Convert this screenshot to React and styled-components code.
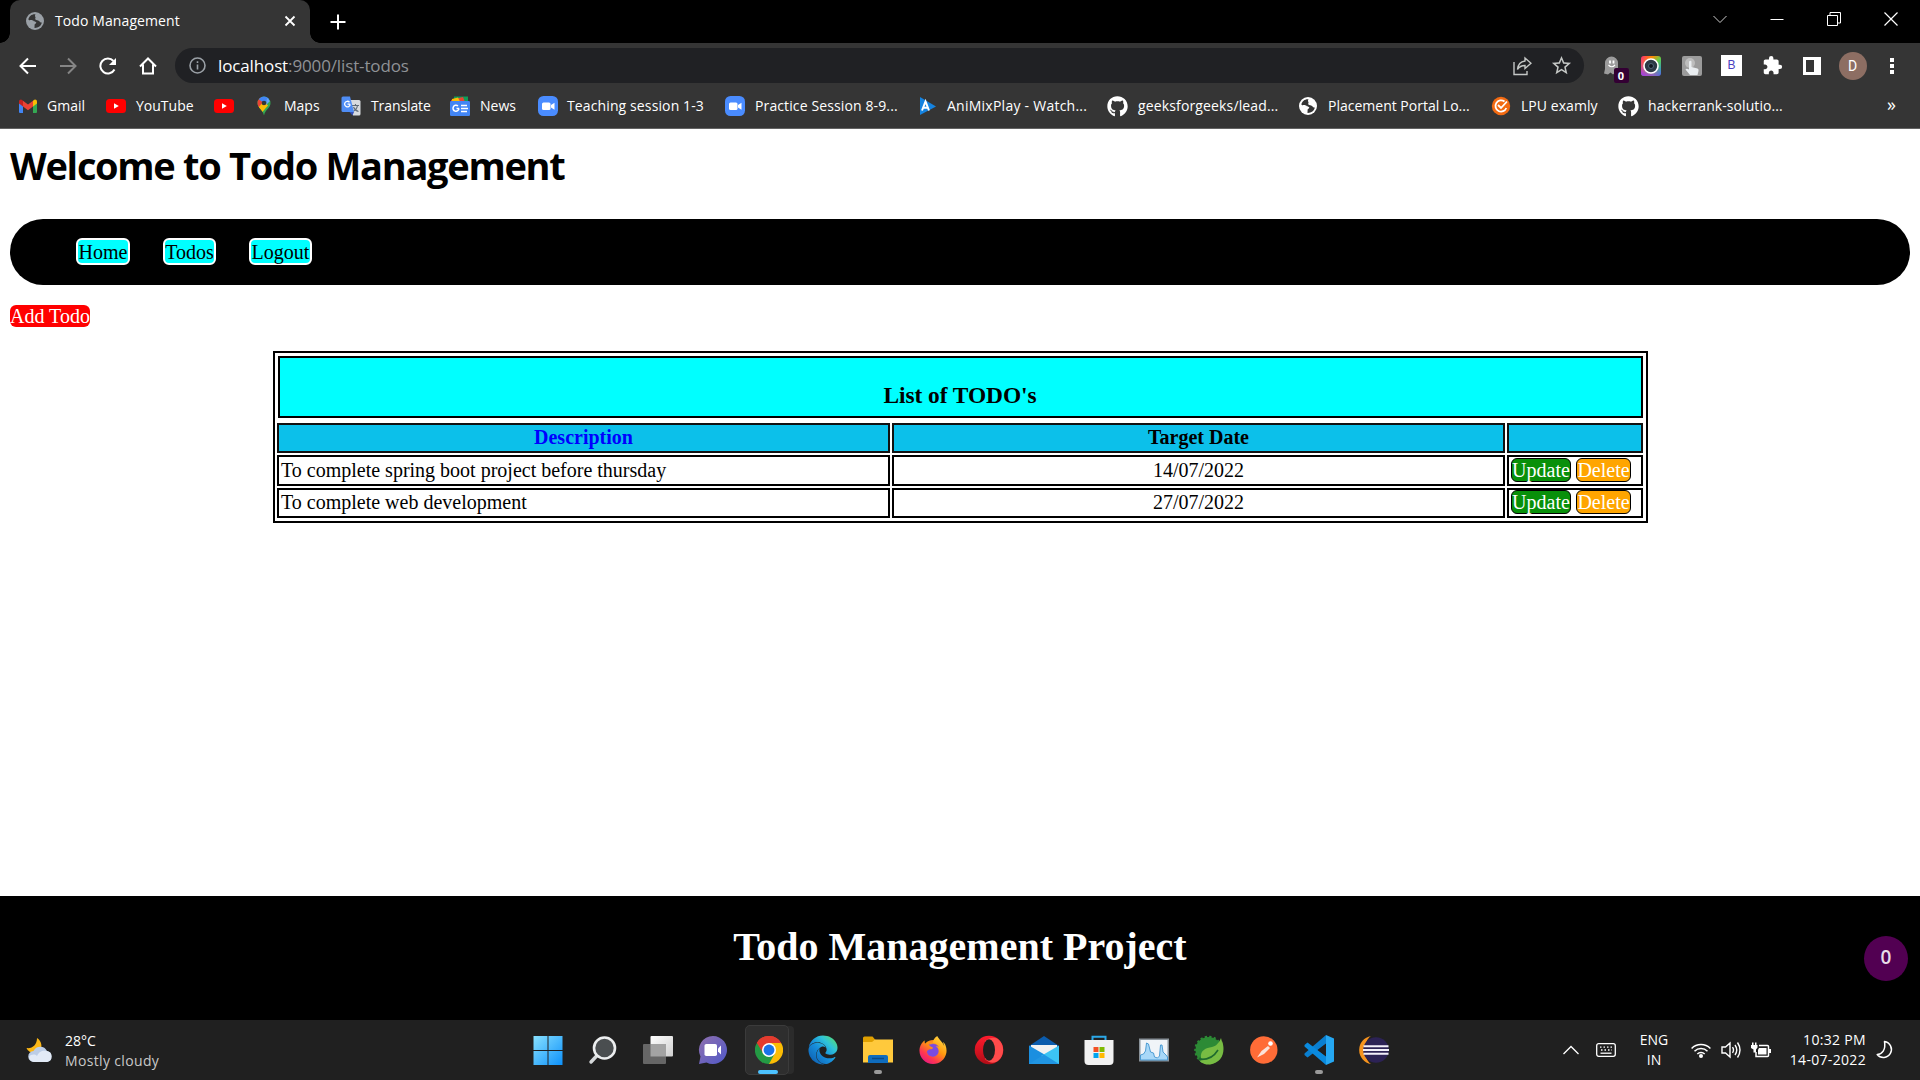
import React from 'react';
import styled, { createGlobalStyle } from 'styled-components';
import { FaGithub, FaEdge } from 'react-icons/fa';
import { MdExtension, MdStarBorder } from 'react-icons/md';
import { SiFirefoxbrowser } from 'react-icons/si';

const ui = '"Open Sans", "Noto Sans", sans-serif';
const serif = '"Liberation Serif", "Times New Roman", serif';

const Global = createGlobalStyle`
  * { box-sizing: border-box; }
  body { margin: 0; background: #fff; overflow: hidden; }
  svg { display: block; flex: none; }
  a { text-decoration: none; color: inherit; }
`;

const Screen = styled.div`
  width: 1920px;
  height: 1080px;
  display: flex;
  flex-direction: column;
  font-family: ${ui};
`;

/* ---------- browser chrome ---------- */
const TabStrip = styled.div`
  height: 43px;
  background: #000;
  display: flex;
  align-items: stretch;
  padding-left: 10px;
  color: #fff;
`;
const Tab = styled.div`
  position: relative;
  width: 300px;
  background: #353535;
  border-radius: 10px 10px 0 0;
  display: flex;
  align-items: center;
  padding: 0 12px 2px 16px;
  &::before, &::after {
    content: '';
    position: absolute;
    bottom: 0;
    width: 10px;
    height: 10px;
  }
  &::before { left: -10px; background: radial-gradient(circle at 0 0, #000 9.5px, #353535 10px); }
  &::after { right: -10px; background: radial-gradient(circle at 100% 0, #000 9.5px, #353535 10px); }
`;
const TabTitle = styled.span`
  flex: 1;
  margin-left: 11px;
  font-size: 14px;
  letter-spacing: 0.1px;
  white-space: nowrap;
`;
const NewTab = styled.div`
  width: 55px;
  display: flex;
  align-items: center;
  justify-content: center;
`;
const WindowButtons = styled.div`
  margin-left: auto;
  display: flex;
  align-items: center;
  padding-bottom: 6px;
`;
const Slot = styled.div`
  width: ${(p) => p.$w}px;
  flex: none;
  display: flex;
  align-items: center;
  justify-content: center;
`;

const Toolbar = styled.div`
  height: 45px;
  background: #353535;
  display: flex;
  align-items: center;
  padding: 0 9px 0 7px;
  color: #fff;
`;
const Omnibox = styled.div`
  width: 1410px;
  height: 35px;
  margin-left: 8px;
  border-radius: 18px;
  background: #202124;
  display: flex;
  align-items: center;
  padding: 0 3px 0 14px;
  color: #c4c7c5;
`;
const Url = styled.span`
  flex: 1;
  margin-left: 12px;
  padding-bottom: 1px;
  color: #8f9296;
  font-size: 17px;
  letter-spacing: -0.13px;
  white-space: nowrap;
  b { font-weight: 400; color: #fff; }
`;
const Extensions = styled.div`
  display: flex;
  align-items: center;
  margin-left: 7px;
`;
const GhostWrap = styled.div`
  position: relative;
  width: 20px;
  height: 26px;
`;
const GhostBadge = styled.span`
  position: absolute;
  left: 13px;
  top: 15px;
  width: 15px;
  height: 15px;
  border-radius: 2px;
  background: #330033;
  color: #fff;
  font-size: 11px;
  font-weight: 700;
  line-height: 16px;
  text-align: center;
`;
const BBox = styled.div`
  width: 21px;
  height: 21px;
  background: #fff;
  color: #4a3fc0;
  font: 12px/21px "Liberation Sans", Arial, sans-serif;
  text-align: center;
`;
const Avatar = styled.div`
  width: 28px;
  height: 28px;
  border-radius: 50%;
  background: #8d6e63;
  color: #fff;
  font: 14px/28px Roboto, sans-serif;
  text-align: center;
`;

const Bookmarks = styled.div`
  height: 41px;
  background: #353535;
  border-bottom: 1px solid #636363;
  display: flex;
  align-items: center;
  padding: 0 0 4px 18px;
  color: #fff;
`;
const Bookmark = styled.div`
  width: ${(p) => p.$w}px;
  flex: none;
  display: flex;
  align-items: center;
  gap: ${(p) => 10 + (p.$dx || 0)}px;
  font-size: 14px;
  letter-spacing: ${(p) => p.$ls || 0}px;
  white-space: nowrap;
  span { padding-bottom: 2px; }
`;
const More = styled.span`
  margin-left: auto;
  padding: 0 24px 4px 0;
  font-size: 18px;
`;

/* ---------- page ---------- */
const Page = styled.main`
  height: 767px;
  background: #fff;
  padding: 0 10px;
  font-family: ${serif};
  font-size: 20px;
  line-height: 22px;
  color: #000;
`;
const Title = styled.h1`
  margin: 0;
  height: 90px;
  padding-top: 9px;
  font: 700 38px/54px ${ui};
  letter-spacing: -1.3px;
  white-space: nowrap;
`;
const Nav = styled.nav`
  height: 66px;
  border-radius: 33px;
  background: #000;
  display: flex;
  gap: 33px;
  padding: 19px 0 0 66px;
`;
const NavLink = styled.a`
  width: ${(p) => p.$w}px;
  height: 27px;
  padding-top: 1px;
  border: 2px solid #fff;
  border-radius: 6px;
  background: cyan;
  text-align: center;
  white-space: nowrap;
`;
const AddTodo = styled.a`
  display: block;
  width: 80px;
  height: 22px;
  margin: 20px 0 24px;
  border-radius: 6px;
  background: red;
  color: #fff;
  white-space: nowrap;
`;
const TodoTable = styled.div`
  width: 1375px;
  height: 172px;
  margin-left: 263px;
  border: 2px solid #000;
  padding: 3px 3px 3px 2px;
`;
const Caption = styled.div`
  height: 62px;
  margin: 0 0 5px 1px;
  border: 2px solid #000;
  background: cyan;
  padding: 24px 1px 0 0;
  font-size: 23.4px;
  line-height: 26px;
  letter-spacing: -0.05px;
  font-weight: 700;
  text-align: center;
`;
const Row = styled.div`
  display: grid;
  grid-template-columns: 613px 613px 136px;
  column-gap: 2px;
  height: ${(p) => p.$h}px;
  margin-bottom: 2px;
`;
const Cell = styled.div`
  border: 2px solid #000;
  padding: ${(p) => p.$top}px 2px 0;
  text-align: ${(p) => (p.$center ? 'center' : 'left')};
`;
const HeadCell = styled(Cell)`
  border-color: #111;
  background: #0cc0ea;
  color: ${(p) => p.$color || '#000'};
  font-weight: 700;
  text-align: center;
`;
const Actions = styled(Cell)`
  display: flex;
  gap: 5px;
`;
const Action = styled.a`
  width: ${(p) => p.$w}px;
  height: 24px;
  border: 1px solid #000;
  border-radius: 6px;
  background: ${(p) => p.$bg};
  color: #fff;
  display: flex;
  justify-content: center;
`;
const Footer = styled.footer`
  position: relative;
  height: 124px;
  background: #000;
  color: #fff;
  padding-top: 28px;
  font: 700 40px/46px ${serif};
  text-align: center;
`;
const FloatBadge = styled.div`
  position: absolute;
  right: 12px;
  top: 40px;
  width: 44px;
  height: 45px;
  border-radius: 50%;
  background: #520052;
  color: #e8dce8;
  font: 600 19px/43px ${ui};
`;

/* ---------- taskbar ---------- */
const Taskbar = styled.div`
  height: 60px;
  background: #202020;
  display: flex;
  align-items: center;
  color: #fff;
  font-size: 14px;
`;
const Weather = styled.div`
  width: 520.5px;
  display: flex;
  align-items: center;
  gap: 11px;
  padding-left: 26px;
  line-height: 20px;
`;
const WeatherText = styled.div`
  padding-top: 1px;
`;
const Muted = styled.div`
  color: #c8c8c8;
  letter-spacing: 0.35px;
`;
const AppSlot = styled.div`
  position: relative;
  width: 55.07px;
  height: 50px;
  flex: none;
  display: flex;
  align-items: center;
  justify-content: center;
`;
const ActiveTile = styled.div`
  width: 44px;
  height: 50px;
  margin-right: 4px;
  margin-left: 1px;
  border-radius: 5px;
  background: #2e2e2e;
  border: 1px solid #3b3b3b;
  box-shadow: 6px 0 0 -1px #2b2b2b;
  display: flex;
  align-items: center;
  justify-content: center;
  padding-left: 4px;
`;
const Indicator = styled.i`
  position: absolute;
  bottom: 1px;
  left: calc(50% - ${(p) => p.$w / 2}px);
  width: ${(p) => p.$w}px;
  height: 4px;
  border-radius: 2px;
  background: ${(p) => p.$c};
`;
const Tray = styled.div`
  margin-left: auto;
  display: flex;
  align-items: center;
  padding-right: 17px;
`;
const Stack = styled.div`
  width: ${(p) => p.$w}px;
  text-align: ${(p) => p.$align};
  line-height: 20px;
  letter-spacing: ${(p) => p.$ls || 0}px;
  white-space: nowrap;
`;

/* ---------- icons ---------- */
const Svg = ({ s = 20, w, h, vb, children, ...r }) => (
  <svg width={w || s} height={h || s} viewBox={vb || `0 0 ${w || s} ${h || s}`} fill="none" {...r}>
    {children}
  </svg>
);
const Globe = ({ s = 18, color = '#fff' }) => (
  <Svg s={s} vb="0 0 18 18">
    <circle cx="9" cy="9" r="9" fill={color} />
    <path d="M9.500 2.200C6 1.800 3 4 2.300 7.500c1.500 1.300 3.500.6 5 1 .5 1.500 2.800.5 3 2.300-.2 1-1.500.9-1.700 1.900l-.1 3.200c3.500.2 6.700-2 7.300-5.400-1.300.2-2-.7-2.800-1.500-1-.9-2.500-.5-3.600-1.500-.7-1 .6-1.600 0-2.600-.7-.9-.4-1.800.1-2.700z" fill="#353535" />
  </Svg>
);
const YouTube = () => (
  <Svg s={20}>
    <rect x="0" y="3" width="20" height="14" rx="3.500" fill="#f00" />
    <path d="M8 7.200v5.600l4.800-2.800z" fill="#fff" />
  </Svg>
);
const Gmail = () => (
  <Svg s={20}>
    <path d="M1 6v10q0 1 1 1h3V9z" fill="#4285f4" />
    <path d="M19 6v10q0 1-1 1h-3V9z" fill="#34a853" />
    <path d="M15 5v5.500L19 7.500V5.500c0-2-2-2.700-3.300-1.500z" fill="#fbbc04" />
    <path d="M5 5v5.500L1 7.500V5.500c0-2 2-2.700 3.300-1.500z" fill="#c5221f" />
    <path d="M5 4.800L10 8.500l5-3.700v5.700l-5 3.700-5-3.700z" fill="#ea4335" />
  </Svg>
);
const Maps = () => (
  <Svg s={20}>
    <clipPath id="pin"><path d="M10 .5a6.500 6.500 0 0 1 6.500 6.500c0 5-5 6-6.500 12.500C8.500 13 3.500 12 3.500 7A6.500 6.500 0 0 1 10 .5z" /></clipPath>
    <g clipPath="url(#pin)">
      <path d="M0 0h20v20H0z" fill="#34a853" />
      <path d="M0 0h6l4 7-6 6H0z" fill="#ea4335" />
      <path d="M4 12l6-7 4 4.500L7.500 17z" fill="#fbbc04" />
      <path d="M5.500 0H16l-1 4-5 3-5-3.500z" fill="#4285f4" />
      <path d="M13 2l3 3-4 4z" fill="#6aa3fa" />
    </g>
    <circle cx="10" cy="7" r="2.300" fill="#353535" />
  </Svg>
);
const Translate = () => (
  <Svg s={20}>
    <path d="M8 4h10q1.500 0 1.500 1.500V18q0 1.500-1.500 1.500h-6z" fill="#d8dbdf" />
    <path d="M11 9.500h7M14.500 8v1.500M16.500 9.500c-.5 3-2.500 5-4.500 6M12.500 11c1 2.500 3 4 5 4.500" stroke="#5f6b78" strokeWidth="1.100" />
    <path d="M2 .5h7L13 16H2Q.5 16 .5 14.500V2Q.5.5 2 .5z" fill="#4f8df5" />
    <path d="M8.500 16H13l-1.500 3.500z" fill="#3450b8" />
    <path d="M9.200 8.200H6.500M8.500 6.200a2.800 2.800 0 1 0 .7 2.200" stroke="#fff" strokeWidth="1.300" />
  </Svg>
);
const News = () => (
  <Svg s={20}>
    <path d="M4 .5h14V6H4z" fill="#0f9d58" />
    <path d="M1 4l12-3 2 5H1z" fill="#ea4335" />
    <path d="M2 3l6-1.500 2 4H2z" fill="#fbbc04" />
    <rect y="5" width="20" height="15" rx="1.300" fill="#4285f4" />
    <path d="M9 12.500H6.500M8 10a3 3 0 1 0 1 2.500M11 9.500h6M11 12.500h7M11 15.500h6" stroke="#fff" strokeWidth="1.500" />
  </Svg>
);
const Zoom = () => (
  <Svg s={20}>
    <rect width="20" height="20" rx="5.500" fill="#4a8cff" />
    <rect x="4" y="6.500" width="8.500" height="7.500" rx="1.500" fill="#fff" />
    <path d="M13 9l3.500-2.300v7L13 11.500z" fill="#fff" />
  </Svg>
);
const Ani = () => (
  <Svg s={20}>
    <path d="M2 1l16 9.500L2 19z" fill="#1583e0" />
    <path d="M4 14.500L7.500 5.500 11 14.500M5.500 11.800h4" stroke="#fff" strokeWidth="2" />
  </Svg>
);
const Examly = () => (
  <Svg s={20}>
    <circle cx="10" cy="10" r="9.200" fill="#f26a12" />
    <path d="M13.500 5.500A5.600 5.600 0 1 0 15.300 12M7 9l3 3 6-6.500" stroke="#fff" strokeWidth="1.800" />
  </Svg>
);
const Moon = () => (
  <Svg w={18} h={20}>
    <path d="M8.500 1.500A8 8 0 1 1 1.200 14.500C6 14.500 10 10 8.500 1.500z" stroke="#fff" strokeWidth="1.500" strokeLinejoin="round" />
  </Svg>
);
const Start = () => (
  <Svg s={30}>
    <defs><linearGradient id="win" x1="0" y1="0" x2="30" y2="30" gradientUnits="userSpaceOnUse"><stop stopColor="#8be3ff" /><stop offset="1" stopColor="#0c90fa" /></linearGradient></defs>
    <path d="M.5 1h14v14H.5zM15.500 1h14v14h-14zM.5 16h14v14H.5zM15.500 16h14v14h-14z" fill="url(#win)" />
  </Svg>
);
const Search = () => (
  <Svg s={30}>
    <path d="M9.500 20L3 27" stroke="#d5d8da" strokeWidth="3.400" strokeLinecap="round" />
    <circle cx="16.500" cy="13" r="10.500" fill="#4a4e50" stroke="#eceeef" strokeWidth="2.600" />
  </Svg>
);
const TaskView = () => (
  <Svg s={30}>
    <defs><linearGradient id="tv" x2="1" y2="1"><stop stopColor="#fff" /><stop offset="1" stopColor="#d0d0d0" /></linearGradient></defs>
    <rect x="7.500" y="1" width="22.500" height="20.500" rx="1" fill="url(#tv)" />
    <rect x="0" y="9" width="23" height="20" rx="1" fill="#666" />
    <path d="M7.500 9H23v12.500H7.500z" fill="#a3a3a3" />
  </Svg>
);
const Chat = () => (
  <Svg s={30}>
    <defs><linearGradient id="ch" x1="0" y1="0" x2="1" y2="1"><stop stopColor="#8f6fae" /><stop offset="1" stopColor="#5059c9" /></linearGradient></defs>
    <path d="M15 1a14 14 0 1 1-6.500 26.400L1 29l1.500-7.500A14 14 0 0 1 15 1z" fill="url(#ch)" />
    <rect x="6.500" y="9" width="12.500" height="12" rx="1.800" fill="#fff" />
    <path d="M20 13.500l3-3v9l-3-3z" fill="#fff" />
  </Svg>
);
const Chrome = () => (
  <Svg s={28} vb="0 0 48 48">
    <path d="M24 24L3.200 12A24 24 0 0 1 44.800 12z" fill="#ea4335" />
    <path d="M24 24L44.800 12A24 24 0 0 1 24 48z" fill="#fbbc04" />
    <path d="M24 24L24 48A24 24 0 0 1 3.200 12z" fill="#249a44" />
    <path d="M24 12h20.800L34 24z" fill="#fbbc04" />
    <path d="M34 30L24 48l-6-14z" fill="#249a44" />
    <path d="M3.200 12L13.800 30l2-12z" fill="#249a44" />
    <path d="M24 12h20.800A24 24 0 0 0 3.200 12l11 18z" fill="#e33b2e" />
    <circle cx="24" cy="24" r="12" fill="#fff" />
    <circle cx="24" cy="24" r="9.300" fill="#1a73e8" />
  </Svg>
);
const GradientEdge = styled(FaEdge)`
  path { fill: url(#ed); }
`;
const Edge = () => (
  <>
    <svg width="0" height="0"><defs>
      <linearGradient id="ed" x1="0" y1="1" x2="1" y2="0"><stop stopColor="#0c55a8" /><stop offset=".45" stopColor="#178fdc" /><stop offset=".7" stopColor="#2fc3d8" /><stop offset="1" stopColor="#62e353" /></linearGradient>
    </defs></svg>
    <GradientEdge size={30} />
  </>
);
const Folder = () => (
  <Svg s={30}>
    <path d="M0 3q0-1.500 1.500-1.500h8L12.500 5v4H0z" fill="#e0a000" />
    <path d="M0 7h9l3-2.500h18V27.500H0z" fill="#ffc93c" />
    <path d="M5 28v-6q0-2 2-2h16q2 0 2 2v6z" fill="#0f6cbd" />
    <path d="M9 23.500h12" stroke="#0b4a86" strokeWidth="1.500" />
  </Svg>
);
const FoxWrap = styled.span`
  border-radius: 50%;
  background: radial-gradient(circle at 50% 52%, #7a4be0 0 6px, #ff8a1a 8px 10px, transparent 11px);
  path { fill: url(#ff); }
`;
const Firefox = () => (
  <>
    <svg width="0" height="0"><defs>
      <linearGradient id="ff" x1=".9" y1="0" x2=".2" y2="1"><stop stopColor="#ffe24a" /><stop offset=".45" stopColor="#ff980e" /><stop offset=".75" stopColor="#ff3750" /><stop offset="1" stopColor="#e31587" /></linearGradient>
    </defs></svg>
    <FoxWrap><SiFirefoxbrowser size={28} /></FoxWrap>
  </>
);
const Opera = () => (
  <Svg s={30}>
    <defs><linearGradient id="op" x2="0" y2="1"><stop stopColor="#ff1b2d" /><stop offset="1" stopColor="#b00c16" /></linearGradient></defs>
    <circle cx="15" cy="15" r="14.300" fill="url(#op)" />
    <path d="M11 6C15 2 22 1.500 25 5c5.500 5 5.500 15 0 20-4 4-10 3.500-14-1z" fill="#ff4b4b" />
    <ellipse cx="15" cy="15" rx="6" ry="10.700" fill="#202020" />
  </Svg>
);
const Mail = () => (
  <Svg s={30}>
    <path d="M0 11L15 1l15 10v3H0z" fill="#0b5cad" />
    <path d="M2 10h26v14H2z" fill="#f2f2f2" />
    <path d="M0 10.500L18 21v8H0z" fill="#1b8fe0" />
    <path d="M30 10.500L12 21l8 8h10z" fill="#3cc4f4" />
    <path d="M0 29l15-9.500L30 29z" fill="#2196e3" />
  </Svg>
);
const Store = () => (
  <Svg s={30}>
    <path d="M8.500 7V1.800h13V7" stroke="#2ba8e8" strokeWidth="2" />
    <path d="M.5 5h29v21q0 4-4 4h-21q-4 0-4-4z" fill="#f1f1f1" />
    <path d="M9.500 12H14.500v5h-5z" fill="#f25022" /><path d="M15.500 12h5v5h-5z" fill="#7fba00" />
    <path d="M9.500 18h5v5h-5z" fill="#00a4ef" /><path d="M15.500 18h5v5h-5z" fill="#ffb900" />
  </Svg>
);
const Perf = () => (
  <Svg s={30}>
    <rect x=".75" y="4.250" width="28.500" height="21.500" fill="#f0f4f8" stroke="#8a9299" strokeWidth="1.500" />
    <path d="M1.500 20l3-1 2-3 1-8 2 1 2 8 3 1 1 4 3 1 2-2 1-11 1.500 0 1 7 3 3 1.500 2V25H1.500z" fill="#a8d8f8" stroke="#3f94cf" strokeWidth=".9" />
  </Svg>
);
const Spring = () => (
  <Svg s={30}>
    <circle cx="14.500" cy="15" r="13" fill="#2c8a35" stroke="#2c8a35" strokeWidth="2.600" strokeDasharray="2.200 2.200" />
    <path d="M28 6c4 11 0 22-12 23.500C9 30 5 26 4.500 23.500 15 26 25 18 28 6z" fill="#77bc43" />
    <path d="M27 3c3 10 2 16-4 19.500-5 2.500-11 2.500-16 .5C6 15 12 13 18 12c4-.7 7-4 9-9z" fill="#77bc43" />
    <path d="M6 24.500c8 .5 14-3 18-9.500" stroke="#1e6a2e" strokeWidth="1.600" />
    <circle cx="6" cy="24" r="1.600" fill="#1e6a2e" />
  </Svg>
);
const Postman = () => (
  <Svg s={30}>
    <circle cx="14.800" cy="15" r="13.700" fill="#ff6c37" />
    <circle cx="21.500" cy="8.500" r="2.300" fill="#fff" />
    <path d="M19 11l2 2-6 6-7 3.500L12.500 16z" fill="#fbe3da" />
  </Svg>
);
const VsCode = () => (
  <Svg s={30}>
    <path d="M22 0v8.500L3.500 22.500.5 20v-1.500z" fill="#0a7fd0" />
    <path d="M22 30v-8.500L3.500 7.500.5 10v1.500z" fill="#0a8ade" />
    <path d="M22 0l8 3.500v23L22 30z" fill="#25a7f2" />
    <path d="M22 9v12l-8-6z" fill="#202020" />
  </Svg>
);
const Eclipse = () => (
  <Svg s={30}>
    <path d="M12 1A14.200 14.200 0 0 0 12 29C4 24 4 6 12 1z" fill="#f7941e" />
    <circle cx="17" cy="15" r="12.800" fill="#2c2255" />
    <path d="M4.500 11.300h25M4 15h26M4.500 18.700h25" stroke="#f3f0fa" strokeWidth="1.900" />
  </Svg>
);
const WeatherIcon = () => (
  <Svg w={28} h={26}>
    <path d="M11 1c5 3 6 10 2 14H4Q1 13 .5 11C6 12 11 8 11 1z" fill="#fcb716" />
    <path d="M8 25a5.500 5.500 0 0 1-.5-11 7.500 7.500 0 0 1 13.500 0 5.600 5.600 0 0 1 0 11z" fill="#bccde6" />
    <path d="M8 25a5.500 5.500 0 0 1-5-5c2-3 6-3 8-1 2-5 6-6 10-5a5.600 5.600 0 0 1 0 11z" fill="#e2eaf6" />
  </Svg>
);

const bookmarks = [
  { icon: <Gmail />, label: 'Gmail', w: 88, dx: -1 },
  { icon: <YouTube />, label: 'YouTube', w: 108 },
  { icon: <YouTube />, label: '', w: 40 },
  { icon: <Maps />, label: 'Maps', w: 87 },
  { icon: <Translate />, label: 'Translate', w: 109, ls: -0.1 },
  { icon: <News />, label: 'News', w: 88 },
  { icon: <Zoom />, label: 'Teaching session 1-3', w: 187, dx: -1, ls: 0.12 },
  { icon: <Zoom />, label: 'Practice Session 8-9...', w: 193, ls: 0.12 },
  { icon: <Ani />, label: 'AniMixPlay - Watch...', w: 189, dx: -1, ls: 0.25 },
  { icon: <FaGithub size={21} />, label: 'geeksforgeeks/lead...', w: 192, ls: 0.14 },
  { icon: <Globe />, label: 'Placement Portal Lo...', w: 192, dx: 1 },
  { icon: <Examly />, label: 'LPU examly', w: 127, ls: 0.05 },
  { icon: <FaGithub size={21} />, label: 'hackerrank-solutio...', w: 180, dx: -1, ls: 0.08 },
];
const apps = [Start, Search, TaskView, Chat, Chrome, Edge, Folder, Firefox, Opera, Mail, Store, Perf, Spring, Postman, VsCode, Eclipse];
const todos = [
  { text: 'To complete spring boot project before thursday', date: '14/07/2022', h: 31, top: 2 },
  { text: 'To complete web development', date: '27/07/2022', h: 30, top: 1 },
];

export default function App() {
  return (
    <Screen>
      <Global />
      <TabStrip>
        <Tab>
          <Globe color="#9aa0a6" />
          <TabTitle>Todo Management</TabTitle>
          <Svg s={16} stroke="#fff" strokeWidth="1.800"><path d="M3.500 3.500l9 9M12.500 3.500l-9 9" /></Svg>
        </Tab>
        <NewTab><Svg s={16} stroke="#fff" strokeWidth="2"><path d="M8 .5v15M.5 8h15" /></Svg></NewTab>
        <WindowButtons>
          <Slot $w={57}><Svg s={14} stroke="#ccc"><path d="M.5 4L7 10.500 13.500 4" /></Svg></Slot>
          <Slot $w={57}><Svg s={14} stroke="#fff"><path d="M.5 7.500h13" /></Svg></Slot>
          <Slot $w={57}><Svg s={14} stroke="#fff"><path d="M.5 3.500h10v10H.5zM3 3V.5h10.500V11H11" /></Svg></Slot>
          <Slot $w={58}><Svg s={14} stroke="#fff" strokeWidth="1.200"><path d="M.5.5l13 13M13.500.5l-13 13" /></Svg></Slot>
        </WindowButtons>
      </TabStrip>

      <Toolbar>
        <Slot $w={41}><Svg s={18} stroke="#fff" strokeWidth="2"><path d="M17 9H2M9 1.500L1.500 9 9 16.500" /></Svg></Slot>
        <Slot $w={40}><Svg s={18} stroke="#858585" strokeWidth="2"><path d="M1 9h15M9 1.500L16.500 9 9 16.500" /></Svg></Slot>
        <Slot $w={40}><Svg s={18} stroke="#fff" strokeWidth="2"><path d="M15.500 12.500A7.500 7.500 0 1 1 14.500 4" /><path d="M17 1v7h-7z" fill="#fff" stroke="none" /></Svg></Slot>
        <Slot $w={39}><Svg s={18} stroke="#fff" strokeWidth="2"><path d="M1 9.500L9 1.500l8 8M4 7.500V16.500h10V7.500" /></Svg></Slot>
        <Omnibox>
          <Svg s={17} stroke="#9aa0a6" strokeWidth="1.600"><circle cx="8.500" cy="8.500" r="7.500" /><path d="M8.500 7.500v5M8.500 4.300v1.700" /></Svg>
          <Url><b>localhost</b>:9000/list-todos</Url>
          <Slot $w={40}><Svg s={20} stroke="#c4c7c5" strokeWidth="1.400"><path d="M2 6v12.500h13V15" /><path d="M13 2l6 5.200-6 5.300V9.500c-4 0-6 1.500-7.500 4C6 8.500 9 5.500 13 5z" /></Svg></Slot>
          <Slot $w={39}><MdStarBorder size={23} /></Slot>
        </Omnibox>
        <Extensions>
          <Slot $w={39}>
            <GhostWrap>
              <Svg w={20} h={26}><path d="M3 20.500L4 16V10a6.500 6.500 0 0 1 13 0v11l-2.500-1.500L12 21.500 9.500 19.500 7 21.500z" fill="#9c9c9c" /><path d="M9 7.500v3M12.500 7.500v3" stroke="#fff" strokeWidth="1.800" /><path d="M7.500 12q3.300 3.500 6.500 0" stroke="#fff" strokeWidth="1.200" /></Svg>
              <GhostBadge>0</GhostBadge>
            </GhostWrap>
          </Slot>
          <Slot $w={42}>
            <Svg s={20}>
              <defs><linearGradient id="cam" x2="1" y2="1"><stop stopColor="#ff2f6d" /><stop offset=".3" stopColor="#ff8a00" /><stop offset=".55" stopColor="#5fd04a" /><stop offset="1" stopColor="#1e7bff" /></linearGradient><linearGradient id="cam2" x1="0" y1="1" x2=".6" y2=".3"><stop stopColor="#a32cff" /><stop offset="1" stopColor="#ff2f9d" stopOpacity="0" /></linearGradient></defs>
              <rect width="20" height="20" rx="3" fill="url(#cam)" /><rect width="20" height="20" rx="3" fill="url(#cam2)" />
              <circle cx="10" cy="10" r="7" fill="#2c3a45" stroke="#fff" strokeWidth="1.600" /><circle cx="10" cy="10" r="2.500" fill="#10181f" stroke="#4f6675" />
            </Svg>
          </Slot>
          <Slot $w={39}>
            <Svg s={20}><rect width="20" height="20" rx="2" fill="#9b9b9b" /><circle cx="8" cy="7" r="5" fill="#bdbdbd" /><path d="M7 5.500q1.500-1.500 2.500 0V11l6 1.500q1.500.5 1 2.500l-1 4H8L3.500 13.500q1-1.500 3.500 0z" fill="#e9edf0" /></Svg>
          </Slot>
          <Slot $w={41}><BBox>B</BBox></Slot>
          <Slot $w={40}><MdExtension size={21} /></Slot>
          <Slot $w={40}><Svg s={18}><path fillRule="evenodd" d="M0 0h18v18H0zM3 3v12h8V3z" fill="#fff" /></Svg></Slot>
          <Slot $w={41}><Avatar>D</Avatar></Slot>
          <Slot $w={38}><Svg w={4} h={18}><path d="M0 1h4v4H0zM0 7h4v4H0zM0 13h4v4H0z" fill="#fff" /></Svg></Slot>
        </Extensions>
      </Toolbar>

      <Bookmarks>
        {bookmarks.map((b, i) => (
          <Bookmark key={i} $w={b.w} $ls={b.ls} $dx={b.dx}>{b.icon}{b.label && <span>{b.label}</span>}</Bookmark>
        ))}
        <More>»</More>
      </Bookmarks>

      <Page>
        <Title>Welcome to Todo Management</Title>
        <Nav>
          <NavLink $w={54}>Home</NavLink>
          <NavLink $w={53}>Todos</NavLink>
          <NavLink $w={63}>Logout</NavLink>
        </Nav>
        <AddTodo>Add Todo</AddTodo>
        <TodoTable>
          <Caption>List of TODO's</Caption>
          <Row $h={30}>
            <HeadCell $top={1} $color="blue">Description</HeadCell>
            <HeadCell $top={1}>Target Date</HeadCell>
            <HeadCell $top={1} />
          </Row>
          {todos.map((t) => (
            <Row key={t.date} $h={t.h}>
              <Cell $top={t.top}>{t.text}</Cell>
              <Cell $top={t.top} $center>{t.date}</Cell>
              <Actions $top={t.top - 1}>
                <Action $w={60} $bg="#08900a">Update</Action>
                <Action $w={55} $bg="orange">Delete</Action>
              </Actions>
            </Row>
          ))}
        </TodoTable>
      </Page>
      <Footer>
        Todo Management Project
        <FloatBadge>0</FloatBadge>
      </Footer>

      <Taskbar>
        <Weather>
          <WeatherIcon />
          <WeatherText>
            <div>28°C</div>
            <Muted>Mostly cloudy</Muted>
          </WeatherText>
        </Weather>
        {apps.map((Icon, i) => (
          <AppSlot key={i}>
            {Icon === Chrome ? <ActiveTile><Icon /></ActiveTile> : <Icon />}
            {Icon === Chrome && <Indicator $w={20} $c="#4cc2ff" />}
            {(Icon === Folder || Icon === VsCode) && <Indicator $w={8} $c="#9a9a9a" />}
          </AppSlot>
        ))}
        <Tray>
          <Slot $w={36}><Svg w={16} h={10} stroke="#fff" strokeWidth="1.300"><path d="M.5 9L8 1.500 15.500 9" /></Svg></Slot>
          <Slot $w={34}>
            <Svg w={20} h={14} stroke="#fff" strokeWidth="1.300"><rect x=".7" y=".7" width="18.600" height="12.600" rx="2" /><path d="M4 4.200h12M5 7h11" strokeDasharray="1.500 2" /><path d="M4.500 10.200h11" /></Svg>
          </Slot>
          <Stack $w={62} $align="center">ENG<br />IN</Stack>
          <Slot $w={31}>
            <Svg w={20} h={16} stroke="#fff" strokeWidth="1.500"><path d="M.6 6.500a13.300 13.300 0 0 1 18.800 0M3.500 9.300a9.200 9.200 0 0 1 13 0M6.300 12a5.200 5.200 0 0 1 7.400 0" /><circle cx="10" cy="14" r="2" fill="#fff" stroke="none" /></Svg>
          </Slot>
          <Slot $w={30}>
            <Svg w={20} h={18} stroke="#fff" strokeWidth="1.400"><path d="M1 6h3.500L9 2v14l-4.500-4H1zM11.500 6.200q2 2.800 0 5.600M14 4q3.500 5 0 10M16.500 1.500q5 7.500 0 15" /></Svg>
          </Slot>
          <Slot $w={30}>
            <Svg w={20} h={16}><path d="M8 3.500h8.500q1 0 1 1v9q0 1-1 1H5V10" stroke="#fff" strokeWidth="1.500" /><path d="M8 6h7.500v6.500H7V8zM18 7h2v4h-2zM0 3h6.500v2.500L5 7.500v3H2.500v-3L0 6zM1 .5h1.500V3H1zM4 .5h1.500V3H4z" fill="#fff" /></Svg>
          </Slot>
          <Stack $w={90} $align="right" $ls={0.32}>10:32 PM<br />14-07-2022</Stack>
          <Slot $w={37}><Moon /></Slot>
        </Tray>
      </Taskbar>
    </Screen>
  );
}
